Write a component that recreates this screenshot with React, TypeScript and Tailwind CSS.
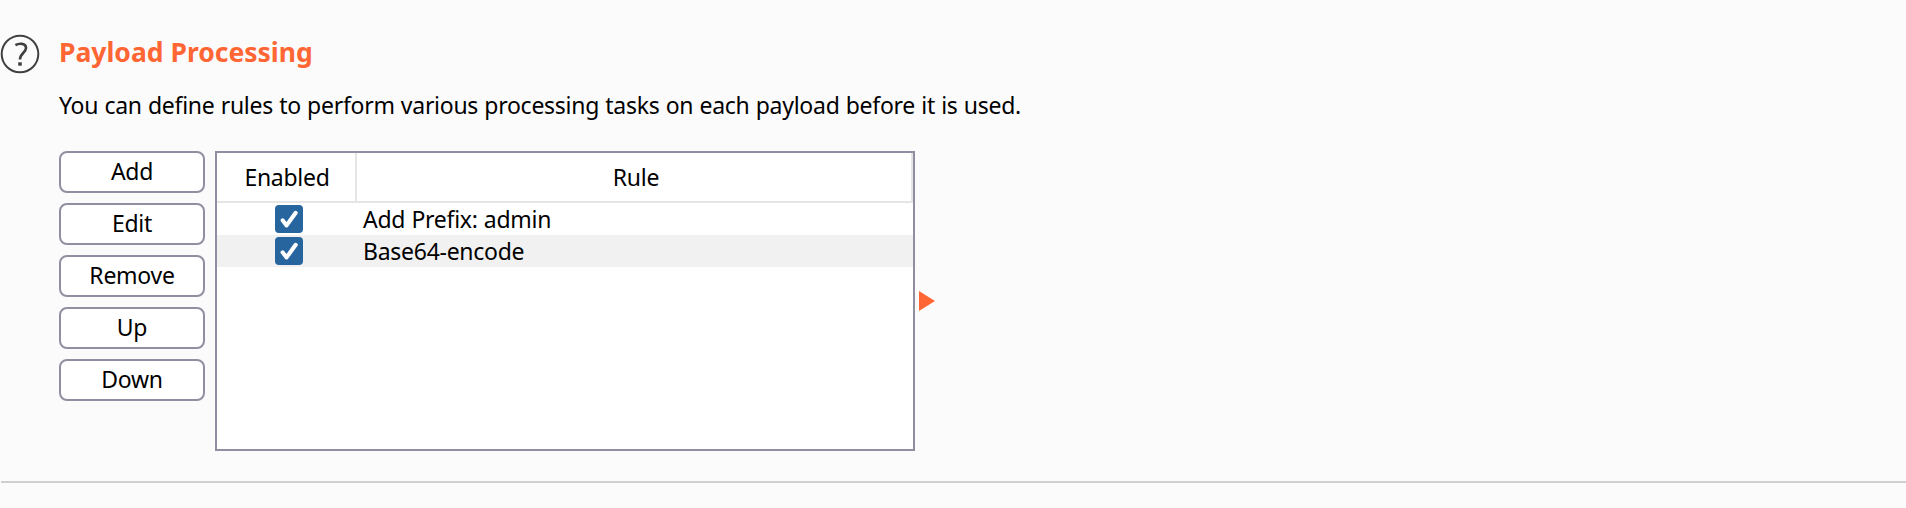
const actions = ["Add", "Edit", "Remove", "Up", "Down"];
const rules = ["Add Prefix: admin", "Base64-encode"];

function HelpIcon() {
  return (
    <svg className="mt-[34px] h-10 w-10 shrink-0" viewBox="0 0 40 40" fill="none" stroke="#404040">
      <circle cx="20" cy="20" r="18.3" strokeWidth="2" />
      <path d="M15.4 11.2C19 9 26 8.9 26 14C26 18.6 20 19.2 20 25.6" strokeWidth="2.6" />
      <path d="M20 28.3V31.7" strokeWidth="3.6" />
    </svg>
  );
}

function CheckedBox() {
  return (
    <svg className="ml-1 h-7 w-7" viewBox="0 0 28 28">
      <rect width="28" height="28" rx="4" fill="#27659f" />
      <path d="M7.6 15.3L11.6 20.4L20.7 7.8" fill="none" stroke="#fff" strokeWidth="4.1" strokeLinecap="round" strokeLinejoin="round" />
    </svg>
  );
}

export default function App() {
  return (
    <main className="flex h-[508px] w-full flex-col overflow-hidden bg-[#fbfbfb] font-['Noto_Sans',sans-serif] text-[23px] leading-8 tracking-[-0.27px] text-black [word-spacing:0.5px]">
      <section className="flex h-[481px] shrink-0">
        <HelpIcon />
        <div className="ml-[19px]">
          <h1 className="mt-[36px] h-8 text-[26.5px] leading-8 font-bold tracking-normal whitespace-nowrap text-[#ff6633] [word-spacing:0px]">
            Payload Processing
          </h1>
          <p className="mt-[21px] h-8 whitespace-nowrap">
            You can define rules to perform various processing tasks on each payload before it is used.
          </p>
          <div className="mt-[30px] flex h-[300px]">
            <div className="flex w-[146px] flex-col gap-[10px]">
              {actions.map((label) => (
                <button key={label} className="flex h-[42px] items-center justify-center rounded-lg border-2 border-[#918ea1] bg-white pb-0.5">
                  {label}
                </button>
              ))}
            </div>
            <div className="ml-[10px] w-[700px] border-2 border-[#918ea1] bg-white">
              <div className="flex h-[50px] border-b-2 border-[#e5e5e5]">
                <div className="flex w-[140px] items-center justify-center border-r-2 border-[#e5e5e5] pl-0.5">Enabled</div>
                <div className="flex flex-1 items-center justify-center border-r-2 border-[#e5e5e5] pl-1">Rule</div>
              </div>
              {rules.map((rule) => (
                <div key={rule} className="flex h-8 items-center even:bg-white odd:bg-[#f1f1f1]">
                  <div className="flex w-[140px] justify-center">
                    <CheckedBox />
                  </div>
                  <div className="pl-1.5 whitespace-nowrap">{rule}</div>
                </div>
              ))}
            </div>
            <svg className="mt-[140px] ml-1 h-5 w-4" viewBox="0 0 16 20">
              <path d="M0 0L16 10L0 20Z" fill="#ff6633" />
            </svg>
          </div>
        </div>
      </section>
      <div className="ml-px h-0.5 shrink-0 bg-[#cfcfcf]" />
    </main>
  );
}
